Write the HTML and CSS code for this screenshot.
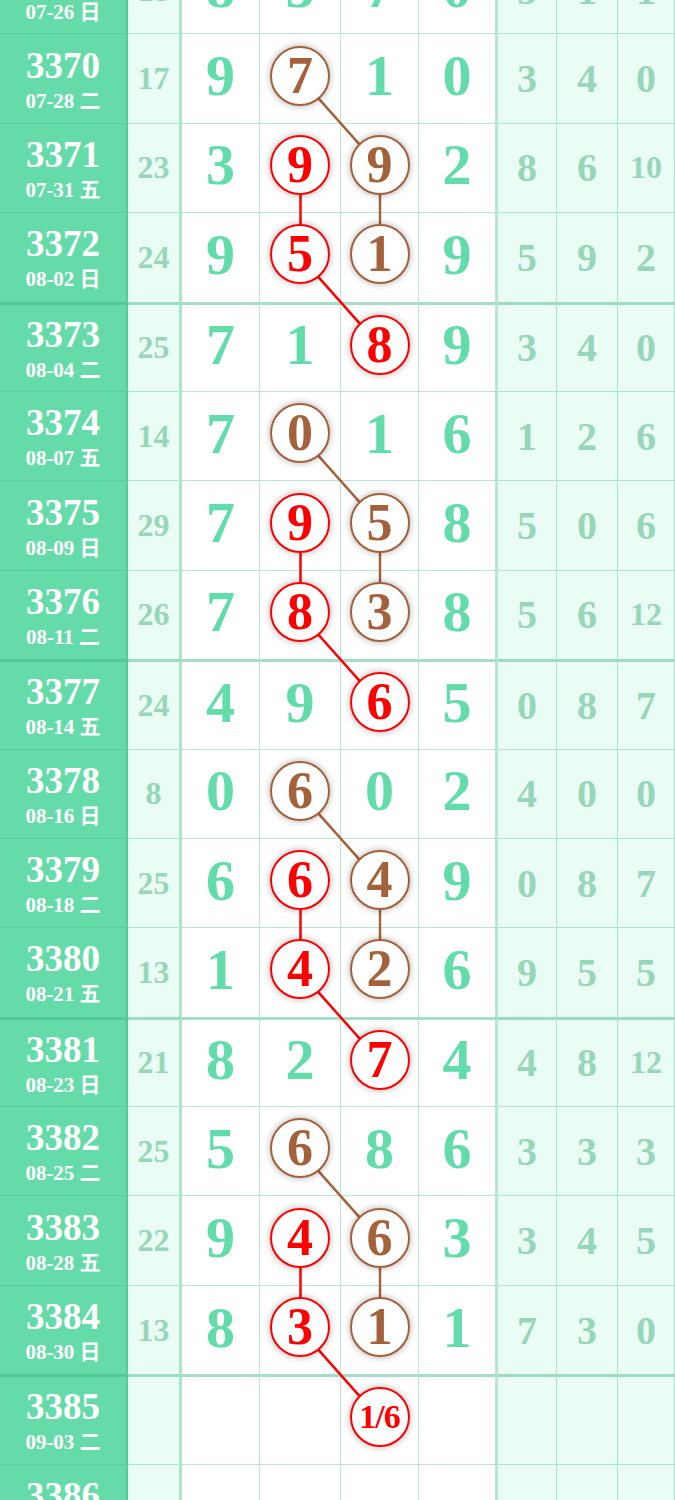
FILE: index.html
```html
<!DOCTYPE html>
<html lang="zh">
<head>
  <meta charset="UTF-8">
  <title>走势图</title>
  <link rel="stylesheet" href="styles.css">
</head>
<body>
  <div class="board">
    <!-- connecting lines between the marked balls -->
    <svg class="links" width="675" height="1610" viewBox="0 0 675 1610">
      <g stroke="#a3623b" stroke-width="2.5">
        <line x1="300.5" y1="134.1" x2="380" y2="223.5"/>
        <line x1="380" y1="223.5" x2="380" y2="312.9"/>
        <line x1="300.5" y1="491.7" x2="380" y2="581.1"/>
        <line x1="380" y1="581.1" x2="380" y2="670.5"/>
        <line x1="300.5" y1="849.3" x2="380" y2="938.7"/>
        <line x1="380" y1="938.7" x2="380" y2="1028.1"/>
        <line x1="300.5" y1="1206.9" x2="380" y2="1296.3"/>
        <line x1="380" y1="1296.3" x2="380" y2="1385.7"/>
      </g>
      <g stroke="#ff0000" stroke-width="2.5">
        <line x1="300.5" y1="223.5" x2="300.5" y2="312.9"/>
        <line x1="300.5" y1="312.9" x2="380" y2="402.3"/>
        <line x1="300.5" y1="581.1" x2="300.5" y2="670.5"/>
        <line x1="300.5" y1="670.5" x2="380" y2="759.9"/>
        <line x1="300.5" y1="938.7" x2="300.5" y2="1028.1"/>
        <line x1="300.5" y1="1028.1" x2="380" y2="1117.5"/>
        <line x1="300.5" y1="1296.3" x2="300.5" y2="1385.7"/>
        <line x1="300.5" y1="1385.7" x2="380" y2="1475.1"/>
      </g>
    </svg>

    <div class="row grp">
      <div class="issue"><b>3369</b><span>07-26 日</span></div>
      <div class="sum">18</div>
      <div class="d">8</div><div class="d">3</div><div class="d">7</div><div class="d end">0</div>
      <div class="x">5</div><div class="x">1</div><div class="x">1</div>
    </div>
    <div class="row">
      <div class="issue"><b>3370</b><span>07-28 二</span></div>
      <div class="sum">17</div>
      <div class="d">9</div><div class="d"><i class="ball brown">7</i></div><div class="d">1</div><div class="d end">0</div>
      <div class="x">3</div><div class="x">4</div><div class="x">0</div>
    </div>
    <div class="row">
      <div class="issue"><b>3371</b><span>07-31 五</span></div>
      <div class="sum">23</div>
      <div class="d">3</div><div class="d"><i class="ball red">9</i></div><div class="d"><i class="ball brown">9</i></div><div class="d end">2</div>
      <div class="x">8</div><div class="x">6</div><div class="x two">10</div>
    </div>
    <div class="row">
      <div class="issue"><b>3372</b><span>08-02 日</span></div>
      <div class="sum">24</div>
      <div class="d">9</div><div class="d"><i class="ball red">5</i></div><div class="d"><i class="ball brown">1</i></div><div class="d end">9</div>
      <div class="x">5</div><div class="x">9</div><div class="x">2</div>
    </div>
    <div class="row grp">
      <div class="issue"><b>3373</b><span>08-04 二</span></div>
      <div class="sum">25</div>
      <div class="d">7</div><div class="d">1</div><div class="d"><i class="ball red">8</i></div><div class="d end">9</div>
      <div class="x">3</div><div class="x">4</div><div class="x">0</div>
    </div>
    <div class="row">
      <div class="issue"><b>3374</b><span>08-07 五</span></div>
      <div class="sum">14</div>
      <div class="d">7</div><div class="d"><i class="ball brown">0</i></div><div class="d">1</div><div class="d end">6</div>
      <div class="x">1</div><div class="x">2</div><div class="x">6</div>
    </div>
    <div class="row">
      <div class="issue"><b>3375</b><span>08-09 日</span></div>
      <div class="sum">29</div>
      <div class="d">7</div><div class="d"><i class="ball red">9</i></div><div class="d"><i class="ball brown">5</i></div><div class="d end">8</div>
      <div class="x">5</div><div class="x">0</div><div class="x">6</div>
    </div>
    <div class="row">
      <div class="issue"><b>3376</b><span>08-11 二</span></div>
      <div class="sum">26</div>
      <div class="d">7</div><div class="d"><i class="ball red">8</i></div><div class="d"><i class="ball brown">3</i></div><div class="d end">8</div>
      <div class="x">5</div><div class="x">6</div><div class="x two">12</div>
    </div>
    <div class="row grp">
      <div class="issue"><b>3377</b><span>08-14 五</span></div>
      <div class="sum">24</div>
      <div class="d">4</div><div class="d">9</div><div class="d"><i class="ball red">6</i></div><div class="d end">5</div>
      <div class="x">0</div><div class="x">8</div><div class="x">7</div>
    </div>
    <div class="row">
      <div class="issue"><b>3378</b><span>08-16 日</span></div>
      <div class="sum">8</div>
      <div class="d">0</div><div class="d"><i class="ball brown">6</i></div><div class="d">0</div><div class="d end">2</div>
      <div class="x">4</div><div class="x">0</div><div class="x">0</div>
    </div>
    <div class="row">
      <div class="issue"><b>3379</b><span>08-18 二</span></div>
      <div class="sum">25</div>
      <div class="d">6</div><div class="d"><i class="ball red">6</i></div><div class="d"><i class="ball brown">4</i></div><div class="d end">9</div>
      <div class="x">0</div><div class="x">8</div><div class="x">7</div>
    </div>
    <div class="row">
      <div class="issue"><b>3380</b><span>08-21 五</span></div>
      <div class="sum">13</div>
      <div class="d">1</div><div class="d"><i class="ball red">4</i></div><div class="d"><i class="ball brown">2</i></div><div class="d end">6</div>
      <div class="x">9</div><div class="x">5</div><div class="x">5</div>
    </div>
    <div class="row grp">
      <div class="issue"><b>3381</b><span>08-23 日</span></div>
      <div class="sum">21</div>
      <div class="d">8</div><div class="d">2</div><div class="d"><i class="ball red">7</i></div><div class="d end">4</div>
      <div class="x">4</div><div class="x">8</div><div class="x two">12</div>
    </div>
    <div class="row">
      <div class="issue"><b>3382</b><span>08-25 二</span></div>
      <div class="sum">25</div>
      <div class="d">5</div><div class="d"><i class="ball brown">6</i></div><div class="d">8</div><div class="d end">6</div>
      <div class="x">3</div><div class="x">3</div><div class="x">3</div>
    </div>
    <div class="row">
      <div class="issue"><b>3383</b><span>08-28 五</span></div>
      <div class="sum">22</div>
      <div class="d">9</div><div class="d"><i class="ball red">4</i></div><div class="d"><i class="ball brown">6</i></div><div class="d end">3</div>
      <div class="x">3</div><div class="x">4</div><div class="x">5</div>
    </div>
    <div class="row">
      <div class="issue"><b>3384</b><span>08-30 日</span></div>
      <div class="sum">13</div>
      <div class="d">8</div><div class="d"><i class="ball red">3</i></div><div class="d"><i class="ball brown">1</i></div><div class="d end">1</div>
      <div class="x">7</div><div class="x">3</div><div class="x">0</div>
    </div>
    <div class="row grp">
      <div class="issue"><b>3385</b><span>09-03 二</span></div>
      <div class="sum"></div>
      <div class="d"></div><div class="d"></div><div class="d"><i class="ball red frac">1/6</i></div><div class="d end"></div>
      <div class="x"></div><div class="x"></div><div class="x"></div>
    </div>
    <div class="row">
      <div class="issue"><b>3386</b><span>09-06 五</span></div>
      <div class="sum"></div>
      <div class="d"></div><div class="d"></div><div class="d"></div><div class="d end"></div>
      <div class="x"></div><div class="x"></div><div class="x"></div>
    </div>
  </div>
</body>
</html>
```

FILE: styles.css
```css
body {
  margin: 0;
  background: #fff;
  font-family: "Liberation Serif", "Noto Sans CJK SC", serif;
  font-weight: bold;
}

.board {
  position: relative;
  width: 675px;
  margin-top: -56px;
  overflow: hidden;
}

.links {
  position: absolute;
  top: 0;
  left: 0;
  z-index: 1;
}

.row {
  display: grid;
  grid-template-columns: 128px 54px 78px 81px 78px 79px 59px 61px 57px;
  height: 89.4px;
}

.row > div {
  box-sizing: border-box;
  display: flex;
  align-items: center;
  justify-content: center;
  border-top: 1px solid rgba(60, 180, 130, 0.35);
  border-right: 1px solid rgba(60, 180, 130, 0.35);
}

.row.grp > div {
  border-top: 3px solid rgba(60, 180, 130, 0.45);
}

/* issue number + date */
.row > .issue {
  flex-direction: column;
  background: #66dbaa;
  color: #fff;
  border-right: 2px solid rgba(0, 90, 60, 0.14);
  padding-top: 2px;
}

.issue b {
  font-size: 37px;
  line-height: 37px;
}

.issue span {
  font-size: 21px;
  line-height: 24px;
  margin-top: 5px;
}

.row > .sum {
  background: #eafdf5;
  color: #97d6b8;
  font-size: 32px;
  border-right-width: 3px;
}

.d {
  color: #62dcab;
  font-size: 58px;
  padding-bottom: 6px;
}

.row > .d.end {
  border-right-width: 3px;
}

.x {
  background: #eafdf5;
  color: #97d6b8;
  font-size: 40px;
}

.x.two {
  font-size: 32px;
}

/* marked balls */
.ball {
  position: relative;
  z-index: 2;
  box-sizing: border-box;
  width: 60px;
  height: 60px;
  border: 2.5px solid;
  border-radius: 50%;
  background: #fff;
  box-shadow: 0 0 7px rgba(0, 0, 0, 0.32);
  display: flex;
  align-items: center;
  justify-content: center;
  font-style: normal;
  font-size: 52px;
  line-height: 1;
}

.ball.red {
  color: #ff0000;
}

.ball.brown {
  color: #a3623b;
}

.ball.frac {
  font-size: 34px;
  letter-spacing: -1px;
}
```
